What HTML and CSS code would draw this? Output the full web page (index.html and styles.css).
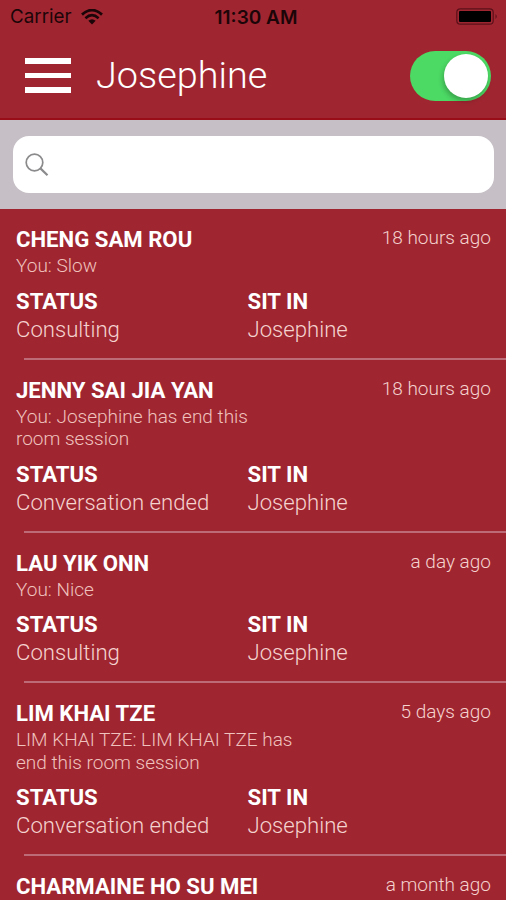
FILE: index.html
```html
<!DOCTYPE html>
<html lang="en">
<head>
  <meta charset="UTF-8">
  <title>Josephine</title>
  <link rel="stylesheet" href="styles.css">
</head>
<body>

  <div class="status-bar">
    <div class="carrier">
      <span class="carrier-name">Carrier</span>
      <svg class="wifi" width="22" height="16" viewBox="0 0 22 16">
        <path d="M1 5.6 Q11 -3.4 21 5.6" fill="none" stroke="#1c0508" stroke-width="2.8"/>
        <path d="M4.4 9.2 Q11 3.2 17.6 9.2" fill="none" stroke="#1c0508" stroke-width="2.6"/>
        <path d="M7.3 11.8 Q11 8.6 14.7 11.8 L11 15.6 Z" fill="#1c0508"/>
      </svg>
    </div>
    <span class="clock">11:30 AM</span>
    <svg class="battery" width="42" height="17" viewBox="0 0 42 17">
      <rect x="0.8" y="0.8" width="36.4" height="15.4" rx="3.5" fill="none" stroke="#5c1019" stroke-width="1.2"/>
      <rect x="3" y="3" width="32" height="11" rx="1" fill="#000"/>
      <path d="M39.5 6 Q42 8.5 39.5 11 Z" fill="#5c1019"/>
    </svg>
  </div>

  <header>
    <button class="menu" aria-label="Menu"><span></span><span></span><span></span></button>
    <h1>Josephine</h1>
    <label class="switch">
      <input type="checkbox" checked>
      <span class="knob"></span>
    </label>
  </header>

  <form class="search">
    <div class="search-box">
      <svg width="24" height="24" viewBox="0 0 24 24" fill="none" stroke="#8b8b8d">
        <circle cx="9.5" cy="9.5" r="8.3" stroke-width="1.7"/>
        <path d="M15.4 15.4 L22.5 22.3" stroke-width="2.2"/>
      </svg>
      <input type="text" aria-label="Search">
    </div>
  </form>

  <ul class="chats">
    <li>
      <div class="top"><h2>CHENG SAM ROU</h2><span class="time">18 hours ago</span></div>
      <p class="preview">You: Slow</p>
      <div class="details">
        <div><h3>STATUS</h3><p>Consulting</p></div>
        <div><h3>SIT IN</h3><p>Josephine</p></div>
      </div>
    </li>
    <li>
      <div class="top"><h2>JENNY SAI JIA YAN</h2><span class="time">18 hours ago</span></div>
      <p class="preview">You: Josephine has end this<br>room session</p>
      <div class="details">
        <div><h3>STATUS</h3><p>Conversation ended</p></div>
        <div><h3>SIT IN</h3><p>Josephine</p></div>
      </div>
    </li>
    <li>
      <div class="top"><h2>LAU YIK ONN</h2><span class="time">a day ago</span></div>
      <p class="preview">You: Nice</p>
      <div class="details">
        <div><h3>STATUS</h3><p>Consulting</p></div>
        <div><h3>SIT IN</h3><p>Josephine</p></div>
      </div>
    </li>
    <li>
      <div class="top"><h2>LIM KHAI TZE</h2><span class="time">5 days ago</span></div>
      <p class="preview">LIM KHAI TZE: LIM KHAI TZE has<br>end this room session</p>
      <div class="details">
        <div><h3>STATUS</h3><p>Conversation ended</p></div>
        <div><h3>SIT IN</h3><p>Josephine</p></div>
      </div>
    </li>
    <li>
      <div class="top"><h2>CHARMAINE HO SU MEI</h2><span class="time">a month ago</span></div>
    </li>
  </ul>

</body>
</html>
```

FILE: styles.css
```css
* {
  box-sizing: border-box;
}

body {
  margin: 0;
  height: 900px;
  overflow: hidden;
  background-color: #9f2631;
  color: #fff;
  font-family: Roboto, sans-serif;
}

h1, h2, h3, p, ul {
  margin: 0;
  padding: 0;
}

/* Status bar */
.status-bar {
  display: grid;
  grid-template-columns: 1fr auto 1fr;
  align-items: center;
  height: 33px;
  padding: 0 8px 0 10px;
  color: #1c0508;
  font-family: Inter, sans-serif;
  font-size: 18.8px;
}

.carrier {
  display: flex;
  align-items: center;
  gap: 9px;
}

.clock {
  margin-left: 4px;
  padding-top: 1px;
  font-size: 19px;
  font-weight: 600;
}

.battery {
  justify-self: end;
}

/* Header */
header {
  display: flex;
  align-items: center;
  height: 87px;
  padding: 0 15px 0 25px;
  border-bottom: 2px solid #980d17;
}

.menu {
  display: flex;
  flex-direction: column;
  gap: 9px;
  width: 46px;
  padding: 0;
  border: none;
  background: none;
}

.menu span {
  height: 5.5px;
  background-color: #fff;
}

h1 {
  flex: 1;
  margin-left: 25px;
  padding-bottom: 2px;
  font-size: 37.8px;
  font-weight: 300;
}

.switch {
  display: flex;
  justify-content: flex-end;
  width: 81px;
  height: 50px;
  padding: 3px;
  border-radius: 25px;
  background-color: #4cd964;
}

.switch input {
  display: none;
}

.knob {
  width: 44px;
  height: 44px;
  border-radius: 50%;
  background-color: #fff;
  box-shadow: -1px 3px 5px rgba(0,0,0,0.25);
}

/* Search */
.search {
  height: 89px;
  padding: 16px 12px 0 13px;
  background-color: #c6c0c6;
}

.search-box {
  display: flex;
  align-items: center;
  height: 57px;
  padding: 0 12px;
  border-radius: 16px;
  background-color: #fff;
}

.search-box input {
  flex: 1;
  border: none;
  outline: none;
  background: none;
  font-size: 20px;
}

/* Chat list */
.chats {
  list-style-type: none;
}

.chats li {
  padding: 16px 15px 16px 16px;
  background: linear-gradient(#bd6b76, #bd6b76) 24px 100% / 100% 2px no-repeat;
}

.top {
  display: flex;
  justify-content: space-between;
}

h2, h3 {
  font-size: 22.15px;
  font-weight: 700;
  line-height: 28px;
}

.time {
  color: #f5d3cf;
  font-size: 19px;
  font-weight: 300;
  line-height: 25px;
}

.preview {
  margin: 2px 0 9px;
  color: #f0c2be;
  font-size: 19px;
  font-weight: 300;
  line-height: 22.5px;
}

.details {
  display: grid;
  grid-template-columns: 231.5px 1fr;
}

.details p {
  color: #f5d3cf;
  font-size: 22.15px;
  font-weight: 300;
  line-height: 29px;
}
```
